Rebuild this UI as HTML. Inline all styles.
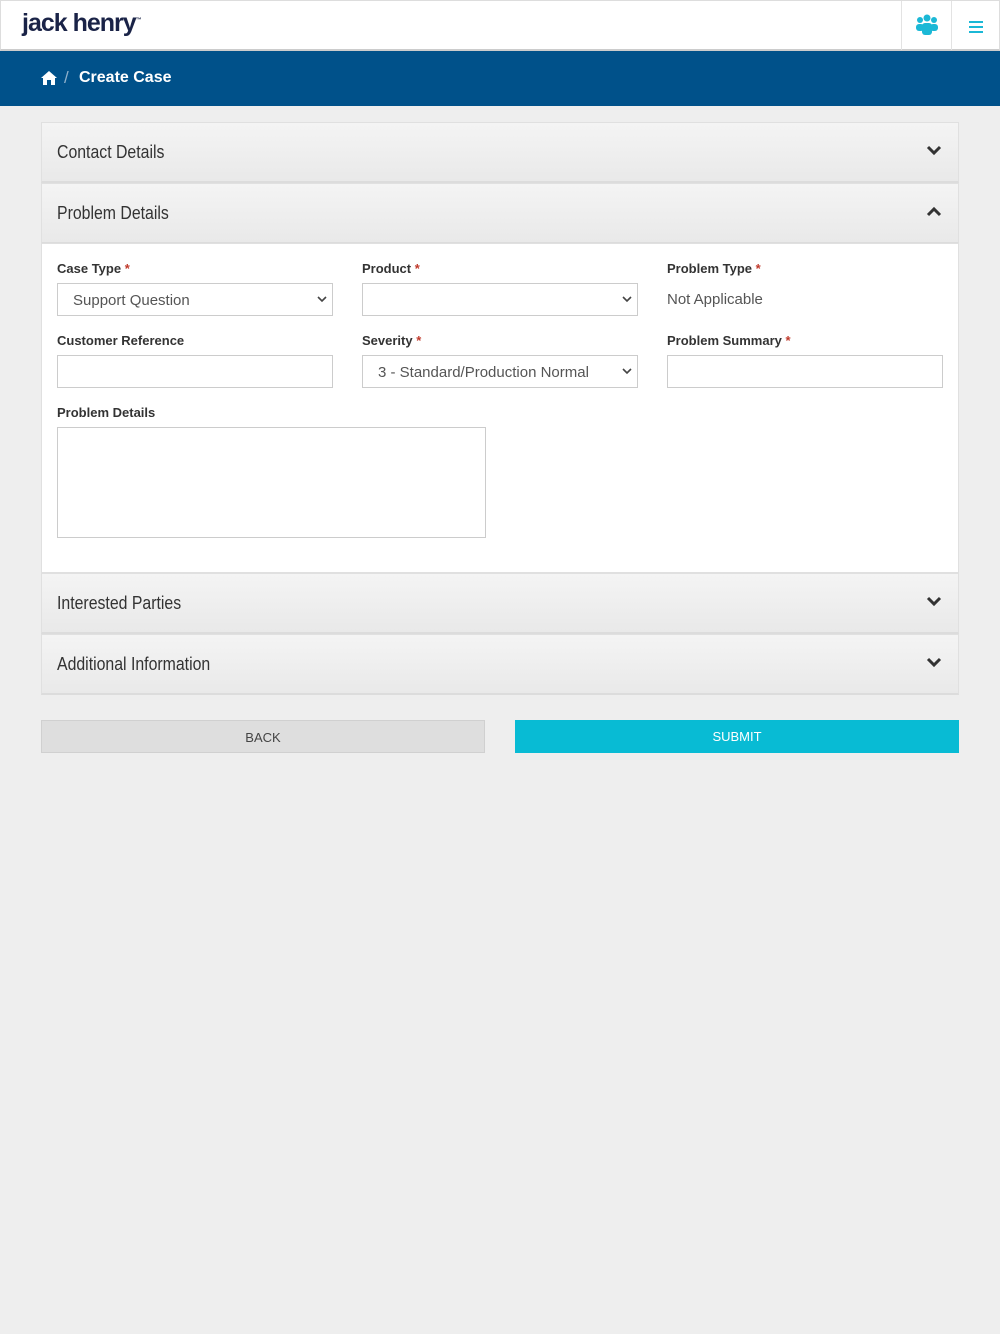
<!DOCTYPE html>
<html><head><style>
*{box-sizing:border-box;margin:0;padding:0}
body{width:1000px;height:1334px;background:#eeeeee;font-family:"Liberation Sans",sans-serif;position:relative;overflow:hidden}
.top{position:absolute;left:0;top:0;width:1000px;height:51px;background:#fff;border:1px solid #ddd;border-bottom:2px solid #ccc}
.logo{position:absolute;left:21px;top:8px;font-size:25px;font-weight:bold;color:#1a2347;letter-spacing:-1px}
.ic{position:absolute;top:0;height:49px;width:50px;border-left:1px solid #e3e3e3}
.blue{position:absolute;left:0;top:51px;width:1000px;height:55px;background:#00518a}
.crumb{position:absolute;left:79px;top:69px;color:#fff;font-weight:bold;font-size:16px}
.slash{position:absolute;left:64px;top:68px;color:#8fb1cc;font-size:17px}
.ph{position:absolute;left:41px;width:918px;height:61px;background:linear-gradient(#f4f4f4,#e9e9e9);border:1px solid #e0e0e0;border-bottom:2px solid #dcdcdc}
.ph span{position:absolute;left:15px;top:19px;font-size:18px;color:#333;transform:scaleX(.88);transform-origin:left}
.ph svg{position:absolute;right:16px;top:22px}
.body{position:absolute;left:41px;top:243px;width:918px;height:330px;background:#fff;border:1px solid #e0e0e0}
.lb{position:absolute;font-size:13px;font-weight:bold;color:#333}
.lb i{color:#c0392b;font-style:normal}
.in{position:absolute;width:276px;height:33px;border:1px solid #ccc;background:#fff;font-size:15px;color:#555;padding:8px 15px}
.in svg{position:absolute;right:5px;top:12px}
.btn{position:absolute;top:720px;height:33px;width:444px;text-align:center;font-size:13px;padding-top:9px}
</style></head><body>
<div class="top">
<div class="logo">jack henry<sup style="font-size:6px">™</sup></div>
<div class="ic" style="left:900px"><svg x="0" width="50" height="49"><g fill="#1bb8d6"><circle cx="18" cy="19" r="3"/><circle cx="25" cy="17" r="3.5"/><circle cx="32" cy="19" r="3"/><rect x="14" y="23" width="8" height="7" rx="3"/><rect x="28" y="23" width="8" height="7" rx="3"/><rect x="20" y="22" width="10" height="12" rx="3"/></g></svg></div>
<div class="ic" style="left:950px"><svg width="50" height="49"><g fill="#1bb8d6"><rect x="17" y="20" width="14" height="2"/><rect x="17" y="25" width="14" height="2"/><rect x="17" y="30" width="14" height="2"/></g></svg></div>
</div>
<div class="blue"></div>
<svg style="position:absolute;left:41px;top:71px" width="16" height="14"><path d="M8 0L0 7h2v7h4V9h4v5h4V7h2z" fill="#fff"/></svg>
<div class="slash">/</div>
<div class="crumb">Create Case</div>

<div class="ph" style="top:122px"><span>Contact Details</span><svg width="16" height="12"><path d="M2 2l6 6 6-6" stroke="#333" stroke-width="3" fill="none"/></svg></div>
<div class="ph" style="top:183px"><span>Problem Details</span><svg width="16" height="12"><path d="M2 9l6-6 6 6" stroke="#333" stroke-width="3" fill="none"/></svg></div>
<div class="body"></div>
<div class="lb" style="left:57px;top:261px">Case Type <i>*</i></div>
<div class="lb" style="left:362px;top:261px">Product <i>*</i></div>
<div class="lb" style="left:667px;top:261px">Problem Type <i>*</i></div>
<div class="in" style="left:57px;top:283px">Support Question<svg width="10" height="7"><path d="M1 1l4 4 4-4" stroke="#444" stroke-width="1.6" fill="none"/></svg></div>
<div class="in" style="left:362px;top:283px"><svg width="10" height="7"><path d="M1 1l4 4 4-4" stroke="#444" stroke-width="1.6" fill="none"/></svg></div>
<div style="position:absolute;left:667px;top:291px;font-size:15px;color:#555">Not Applicable</div>
<div class="lb" style="left:57px;top:333px">Customer Reference</div>
<div class="lb" style="left:362px;top:333px">Severity <i>*</i></div>
<div class="lb" style="left:667px;top:333px">Problem Summary <i>*</i></div>
<div class="in" style="left:57px;top:355px"></div>
<div class="in" style="left:362px;top:355px">3 - Standard/Production Normal<svg width="10" height="7"><path d="M1 1l4 4 4-4" stroke="#444" stroke-width="1.6" fill="none"/></svg></div>
<div class="in" style="left:667px;top:355px"></div>
<div class="lb" style="left:57px;top:405px">Problem Details</div>
<div class="in" style="left:57px;top:427px;width:429px;height:111px"></div>

<div class="ph" style="top:573px"><span>Interested Parties</span><svg width="16" height="12"><path d="M2 2l6 6 6-6" stroke="#333" stroke-width="3" fill="none"/></svg></div>
<div class="ph" style="top:634px"><span>Additional Information</span><svg width="16" height="12"><path d="M2 2l6 6 6-6" stroke="#333" stroke-width="3" fill="none"/></svg></div>

<div class="btn" style="left:41px;background:#dedede;border:1px solid #d0d0d0;color:#444">BACK</div>
<div class="btn" style="left:515px;background:#08bbd4;color:#fff">SUBMIT</div>
</body></html>
